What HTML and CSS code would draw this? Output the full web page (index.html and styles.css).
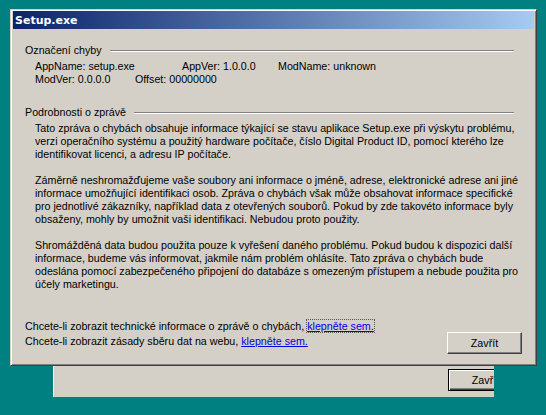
FILE: index.html
```html
<!DOCTYPE html>
<html lang="cs">
<head>
<meta charset="utf-8">
<title>Setup.exe</title>
<link rel="stylesheet" href="styles.css">
</head>
<body>
<div class="desktop">
  <div class="back-window">
    <div class="btn btn-default">Zavřít</div>
  </div>
  <div class="window">
    <div class="titlebar"><span class="title">Setup.exe</span></div>
    <div class="content">
      <div class="group-head"><span>Označení chyby</span><span class="etch"></span></div>
      <div class="info">
        <div class="info-row"><span class="c1">AppName: setup.exe</span><span class="c2">AppVer: 1.0.0.0</span><span>ModName: unknown</span></div>
        <div class="info-row"><span class="c3">ModVer: 0.0.0.0</span><span>Offset: 00000000</span></div>
      </div>
      <div class="group-head second"><span>Podrobnosti o zprávě</span><span class="etch"></span></div>
      <div class="details">
        <p>Tato zpráva o chybách obsahuje informace týkající se stavu aplikace Setup.exe při výskytu problému,<br>verzi operačního systému a použitý hardware počítače, číslo Digital Product ID, pomocí kterého lze<br>identifikovat licenci, a adresu IP počítače.</p>
        <p>Záměrně neshromažďujeme vaše soubory ani informace o jméně, adrese, elektronické adrese ani jiné<br>informace umožňující identifikaci osob. Zpráva o chybách však může obsahovat informace specifické<br>pro jednotlivé zákazníky, například data z otevřených souborů. Pokud by zde takovéto informace byly<br>obsaženy, mohly by umožnit vaši identifikaci. Nebudou proto použity.</p>
        <p>Shromážděná data budou použita pouze k vyřešení daného problému. Pokud budou k dispozici další<br>informace, budeme vás informovat, jakmile nám problém ohlásíte. Tato zpráva o chybách bude<br>odeslána pomocí zabezpečeného připojení do databáze s omezeným přístupem a nebude použita pro<br>účely marketingu.</p>
      </div>
      <div class="footer">
        <div class="links">
          <div class="link-line">Chcete-li zobrazit technické informace o zprávě o chybách, <a class="link focus" href="#">klepněte sem.</a></div>
          <div class="link-line">Chcete-li zobrazit zásady sběru dat na webu, <a class="link" href="#">klepněte sem.</a></div>
        </div>
        <div class="btn btn-close">Zavřít</div>
      </div>
    </div>
  </div>
</div>
</body>
</html>
```
FILE: styles.css
```css
html, body {
  margin: 0;
  padding: 0;
}
body {
  background: #008080;
  font-family: "Liberation Sans", Arial, sans-serif;
  font-size: 10.7px;
  color: #000;
}
.desktop {
  position: relative;
  width: 546px;
  height: 415px;
  overflow: hidden;
  background: #008080;
}
.back-window {
  position: absolute;
  left: 53px;
  top: 340px;
  width: 441px;
  height: 57px;
  background: #d4d0c8;
  border-left: 1px solid #fff;
  overflow: hidden;
  box-sizing: border-box;
  padding: 29px 0 0 394px;
  display: flex;
}
.window {
  position: absolute;
  left: 10px;
  top: 9px;
  width: 527px;
  height: 357px;
  box-sizing: border-box;
  background: #d4d0c8;
  border-style: solid;
  border-width: 1px;
  border-color: #d4d0c8 #404040 #404040 #d4d0c8;
  box-shadow: inset 1px 1px 0 #fff, inset -1px -1px 0 #808080;
  padding: 1px 2px 2px 2px;
  display: flex;
  flex-direction: column;
}
.titlebar {
  height: 18px;
  flex: none;
  background: linear-gradient(to right, #0a246a, #a6caf0);
  display: flex;
  align-items: center;
  padding-left: 2px;
}
.title {
  font-family: "DejaVu Sans", Verdana, sans-serif;
  font-weight: bold;
  font-size: 11px;
  color: #fff;
}
.content {
  flex: 1;
  padding: 15px 12px 0 12px;
  line-height: 13px;
  white-space: nowrap;
}
.group-head {
  display: flex;
  align-items: center;
  height: 13px;
  margin-right: 8px;
}
.group-head.second {
  margin-top: 20px;
}
.etch {
  flex: 1;
  height: 0;
  border-top: 1px solid #808080;
  border-bottom: 1px solid #fff;
  margin-left: 8px;
}
.info {
  margin-top: 3px;
  padding-left: 10px;
}
.info-row {
  display: flex;
  height: 13px;
}
.c1 { width: 147px; }
.c2 { width: 96px; }
.c3 { width: 100px; }
.details {
  margin-top: 3px;
  padding-left: 10px;
}
.details p {
  margin: 0 0 13px 0;
}
.footer {
  display: flex;
  justify-content: space-between;
  align-items: flex-start;
  margin-top: 28px;
}
.link-line {
  height: 15px;
  line-height: 15px;
}
.link {
  color: #0000e0;
  text-decoration: underline;
}
.focus {
  outline: 1px dotted #555;
  outline-offset: 0;
}
.btn {
  width: 75px;
  height: 22px;
  flex: none;
  box-sizing: border-box;
  display: flex;
  align-items: center;
  justify-content: center;
  background: #d4d0c8;
  font-size: 10.7px;
  color: #000;
}
.btn-close {
  margin-top: 13px;
  border: 1px solid;
  border-color: #fff #404040 #404040 #fff;
  box-shadow: inset -1px -1px 0 #808080;
}
.btn-default {
  border: 1px solid #000;
  box-shadow: inset 1px 1px 0 #fff, inset -1px -1px 0 #404040, inset -2px -2px 0 #808080;
}
```
